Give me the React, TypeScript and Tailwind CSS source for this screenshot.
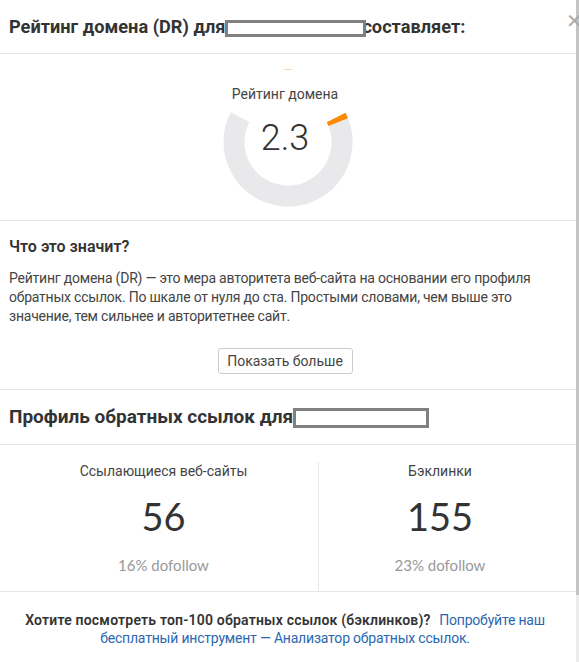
import React from "react";

const R = 54;
const C = 2 * Math.PI * R;
const ARC = (234 / 360) * C;
const VAL = ARC * 0.023;

function Gauge() {
  return (
    <svg width="140" height="140" viewBox="0 0 140 140">
      <g transform="rotate(-27 70 70)">
        <circle cx="70" cy="70" r={R} fill="none" stroke="#e9e9eb" strokeWidth="21" strokeDasharray={`${ARC} ${C}`} />
        <circle cx="70" cy="70" r={R} fill="none" stroke="#ff8a00" strokeWidth="21" strokeDasharray={`${VAL} ${C}`} />
      </g>
    </svg>
  );
}

function Redacted({ w, h }: { w: string; h: string }) {
  return <span className={`inline-block align-middle bg-white border-[3px] border-[#808080] ${w} ${h}`} />;
}

export default function App() {
  return (
    <div className="w-[579px] h-[662px] bg-white flex overflow-hidden relative" style={{ fontFamily: "Roboto, 'Noto Sans', sans-serif" }}>
      <div className="w-[576px] flex flex-col text-[#333]">
        <div className="h-[54px] border-b border-[#e6e6e6] flex items-center px-[9px]">
          <h1 className="text-[18.2px] font-bold text-[#333] whitespace-nowrap">
            Рейтинг домена (DR) для
            <span className="relative z-10 -mr-[4px]"><Redacted w="w-[141px]" h="h-[17px]" /></span>
            составляет:
          </h1>
        </div>

        <div className="h-[167px] border-b border-[#e6e6e6] relative flex flex-col items-center">
          <div className="w-[8px] h-[1px] bg-[#fcd3a6] mt-[15px]" />
          <div className="mt-[2px]">
            <Gauge />
          </div>
          <div className="absolute top-[31px] left-0 w-[570px] text-center text-[14px] text-[#444] leading-[18px]">Рейтинг домена</div>
          <div className="absolute top-[62px] left-0 w-[570px] text-center text-[36px] font-light text-[#333] leading-[44px]">2.3</div>
        </div>

        <div className="h-[169px] border-b border-[#e6e6e6] px-[9px] pt-[16px] flex flex-col">
          <h2 className="text-[16px] font-semibold leading-[20px] text-[#333]">Что это значит?</h2>
          <p className="mt-[12px] text-[14px] leading-[19px] text-[#444] tracking-[-0.22px]">
            Рейтинг домена (DR) — это мера авторитета веб-сайта на основании его профиля обратных ссылок. По шкале от нуля до ста. Простыми словами, чем выше это значение, тем сильнее и авторитетнее сайт.
          </p>
          <div className="flex justify-center mt-[22px] pr-[6px]">
            <button className="w-[135px] h-[26px] border border-[#ccc] rounded-[3px] text-[14px] text-[#444] bg-white">Показать больше</button>
          </div>
        </div>

        <div className="h-[55px] border-b border-[#e6e6e6] flex items-center px-[9px]">
          <h2 className="text-[19px] font-bold text-[#333] whitespace-nowrap">
            Профиль обратных ссылок для
            <Redacted w="w-[136px]" h="h-[20px]" />
          </h2>
        </div>

        <div className="h-[147px] border-b border-[#e6e6e6] px-[9px] pt-[17px]">
          <div className="grid grid-cols-[310px_1fr] w-[552px]">
            <div className="flex flex-col items-center border-r border-[#e6e6e6] pb-[16px]">
              <div className="text-[14px] leading-[18px] text-[#444]">Ссылающиеся веб-сайты</div>
              <div className="mt-[14px] text-[38px] leading-[44px] text-[#333]" style={{ fontFamily: "Lato, sans-serif" }}>56</div>
              <div className="mt-[17px] text-[15px] leading-[20px] text-[#999]" style={{ fontFamily: "Lato, sans-serif" }}>16% dofollow</div>
            </div>
            <div className="flex flex-col items-center">
              <div className="text-[14px] leading-[18px] text-[#444]">Бэклинки</div>
              <div className="mt-[14px] text-[38px] leading-[44px] text-[#333]" style={{ fontFamily: "Lato, sans-serif" }}>155</div>
              <div className="mt-[17px] text-[15px] leading-[20px] text-[#999]" style={{ fontFamily: "Lato, sans-serif" }}>23% dofollow</div>
            </div>
          </div>
        </div>

        <div className="pt-[19px] w-[570px] text-center text-[14px] leading-[18px] px-[20px]">
          <span className="font-semibold text-[#333] tracking-[0.2px] mr-[5px]">Хотите посмотреть топ-100 обратных ссылок (бэклинков)?</span>{" "}
          <a className="text-[#2b67b0] tracking-[-0.2px]">Попробуйте наш бесплатный инструмент — Анализатор обратных ссылок.</a>
        </div>
      </div>

      <div className="w-[3px] flex flex-col">
        <div className="h-[595px] bg-[#c4c4c4]" />
        <div className="flex-1 bg-[#ececec]" />
      </div>

      <div className="absolute top-[11px] left-[566px] text-[#aaa] text-[20px] leading-[20px]">✕</div>
    </div>
  );
}
